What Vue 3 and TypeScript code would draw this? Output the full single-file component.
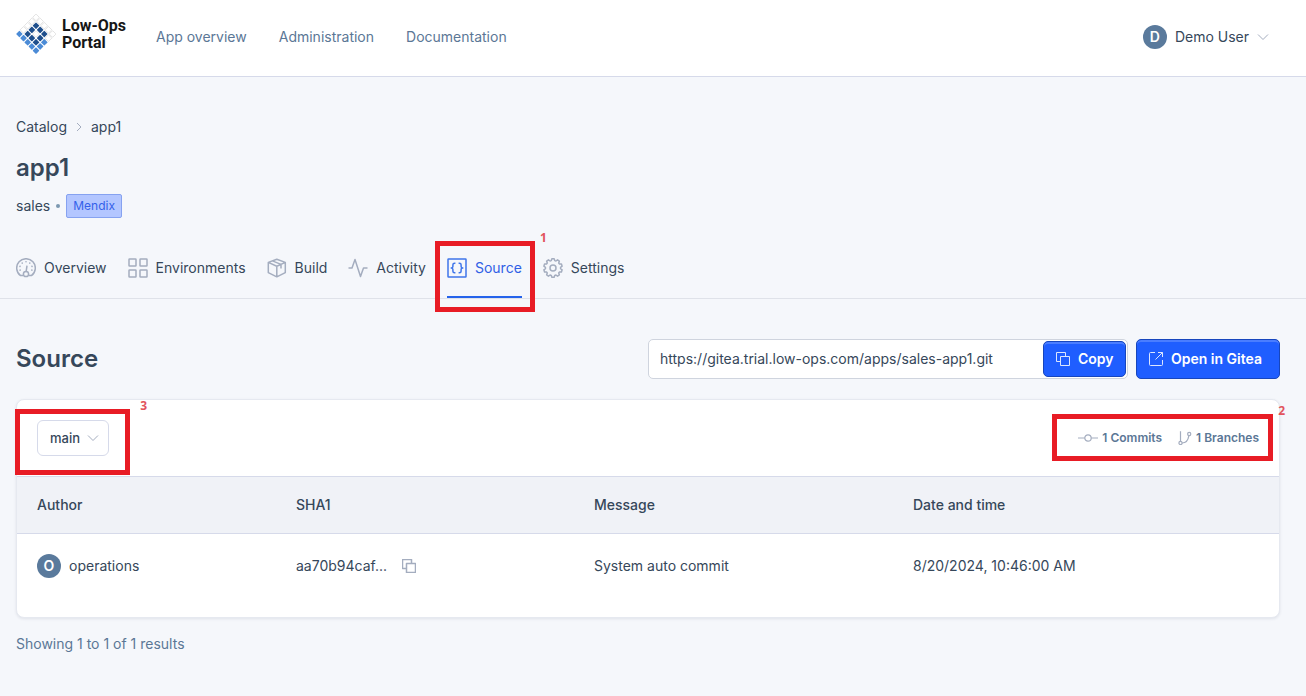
<script setup lang="ts">
import { ref } from 'vue'

interface Cell { x: number; y: number; kind: string }

const cells: Cell[] = []
for (let i = 0; i < 5; i++) {
  for (let j = 0; j < 5; j++) {
    const inner = i > 0 && i < 4 && j > 0 && j < 4
    let kind = 'empty'
    if (inner && !(i === 2 && j === 2)) kind = 'dark'
    else if (j === 0 || (i === 4 && j < 3)) kind = 'light'
    cells.push({ x: 3.4 + (i + j) * 4.15, y: 20 + (i - j) * 4.15, kind })
  }
}

const nav = ['App overview', 'Administration', 'Documentation']
const tabs = ['Overview', 'Environments', 'Build', 'Activity', 'Source', 'Settings']
const columns = ['Author', 'SHA1', 'Message', 'Date and time']
const repoUrl = ref('https://gitea.trial.low-ops.com/apps/sales-app1.git')
const branch = ref('main')

const ticks = [-110, -75, -38, 0, 38, 75, 110]
const gear = (() => {
  const pts: string[] = []
  for (let k = 0; k < 10; k++) {
    const a = (k * 36 - 90) * Math.PI / 180
    const add = (r: number, off: number) => {
      const t = a + off * Math.PI / 180
      pts.push(`${(10 + r * Math.cos(t)).toFixed(2)} ${(10 + r * Math.sin(t)).toFixed(2)}`)
    }
    add(7.6, -13)
    add(9.3, -7)
    add(9.3, 7)
    add(7.6, 13)
  }
  return `M${pts.join('L')}Z`
})()
</script>

<template>
  <div class="page">
    <header class="topbar">
      <a class="brand" href="#">
        <svg width="40" height="40" viewBox="0 0 40 40" aria-hidden="true">
          <rect v-for="(c, n) in cells" :key="n" :class="c.kind" :x="c.x - 2.4" :y="c.y - 2.4" width="4.8" height="4.8" rx="0.5" :transform="`rotate(45 ${c.x} ${c.y})`" />
        </svg>
        <span>Low-Ops<br />Portal</span>
      </a>
      <nav class="mainnav">
        <a v-for="item in nav" :key="item" href="#">{{ item }}</a>
      </nav>
      <button class="user" type="button">
        <span class="avatar">D</span>
        <span>Demo User</span>
        <svg width="12" height="12" viewBox="0 0 12 12" class="icon thin"><path d="M1 3.5 6 8.5l5-5" /></svg>
      </button>
    </header>

    <main>
      <section class="intro">
        <nav class="crumbs">
          <a href="#">Catalog</a>
          <svg width="8" height="10" viewBox="0 0 8 10" class="icon thin"><path d="m2 1 4 4-4 4" /></svg>
          <a href="#">app1</a>
        </nav>
        <h1>app1</h1>
        <div class="meta"><span>sales</span><span class="dot"></span><span class="badge">Mendix</span></div>
      </section>

      <nav class="tabs">
        <a v-for="tab in tabs" :key="tab" href="#" :class="{ active: tab === 'Source' }">
          <svg width="20" height="20" viewBox="0 0 20 20" class="icon">
            <template v-if="tab === 'Overview'">
              <path d="M7.2 17.6H4.6A9.3 9.3 0 1 1 15.4 17.6H12.8" />
              <circle cx="10" cy="16" r="2.6" />
              <path d="M10.2 13.2 11 7.6" />
              <circle v-for="t in ticks" :key="t" class="fill" cx="10" cy="3.8" r="0.8" :transform="`rotate(${t} 10 10)`" />
            </template>
            <template v-else-if="tab === 'Environments'">
              <rect x="1" y="1" width="7" height="7" rx="0.5" /><rect x="12" y="1" width="7" height="7" rx="0.5" />
              <rect x="1" y="12" width="7" height="7" rx="0.5" /><rect x="12" y="12" width="7" height="7" rx="0.5" />
            </template>
            <template v-else-if="tab === 'Build'">
              <path d="M9.8 1.2 18.3 4.4V14.6L9.8 18.8 1.3 14.6V4.4ZM1.3 4.4 9.8 8.2 18.3 4.4M9.8 8.2V18.8M5.4 2.9 14 6.4V10.4" />
            </template>
            <path v-else-if="tab === 'Activity'" d="M0.5 10H4L7 1.5 12.5 18.5 15.5 10H19.5" />
            <template v-else-if="tab === 'Source'">
              <rect x="1" y="1" width="18" height="18" rx="0.5" />
              <path d="M8.4 5.2H7.6C6.4 5.2 5.9 5.8 5.9 6.7V8.5C5.9 9.4 5.2 10 4.2 10 5.2 10 5.9 10.6 5.9 11.5V13.3C5.9 14.2 6.4 14.8 7.6 14.8H8.4M11.6 5.2H12.4C13.6 5.2 14.1 5.8 14.1 6.7V8.5C14.1 9.4 14.8 10 15.8 10 14.8 10 14.1 10.6 14.1 11.5V13.3C14.1 14.2 13.6 14.8 12.4 14.8H11.6" />
            </template>
            <template v-else>
              <path :d="gear" /><circle cx="10" cy="10" r="3" />
            </template>
          </svg>
          <span>{{ tab }}</span>
          <span v-if="tab === 'Source'" class="mark mark-tab"><b>1</b></span>
        </a>
      </nav>

      <section class="content">
        <div class="heading">
          <h2>Source</h2>
          <div class="repo">
            <input v-model="repoUrl" type="text" aria-label="Repository URL" readonly />
            <button class="primary copy" type="button">
              <svg width="14" height="14" viewBox="0 0 14 14" class="icon"><path d="M4.5 9.5H.5V.5H9.5V4.5M4.5 4.5H13.5V13.5H4.5Z" /></svg>
              Copy
            </button>
          </div>
          <button class="primary open" type="button">
            <svg width="14" height="14" viewBox="0 0 14 14" class="icon"><path d="M6 .5H1.5A1 1 0 0 0 .5 1.5V12.5A1 1 0 0 0 1.5 13.5H12.5A1 1 0 0 0 13.5 12.5V8M6.5 7.5 13.5.5M9 .5H13.5V5" /></svg>
            Open in Gitea
          </button>
        </div>

        <div class="card">
          <div class="toolbar">
            <div class="branch">
              <select v-model="branch" aria-label="Branch"><option>main</option></select>
              <svg width="12" height="12" viewBox="0 0 12 12" class="icon thin chevron"><path d="M1 3.5 6 8.5l5-5" /></svg>
              <span class="mark mark-branch"><b>3</b></span>
            </div>
            <div class="stats">
              <a href="#">
                <svg width="20" height="14" viewBox="0 0 20 14" class="icon"><path d="M0 7H6.8M13.2 7H20" /><circle cx="10" cy="7" r="3.2" /></svg>
                1 Commits
              </a>
              <a href="#">
                <svg width="14" height="14" viewBox="0 0 14 14" class="icon"><path d="M2.5.3V10.3M4 12C8 11.8 10.2 9 10.8 4.8" /><circle cx="2.5" cy="12" r="1.6" /><circle cx="11.2" cy="3" r="1.6" /></svg>
                1 Branches
              </a>
              <span class="mark mark-stats"><b>2</b></span>
            </div>
          </div>
          <table>
            <thead><tr><th v-for="c in columns" :key="c" scope="col">{{ c }}</th></tr></thead>
            <tbody>
              <tr>
                <td><div class="cell"><span class="avatar">O</span>operations</div></td>
                <td>
                  <div class="cell sha">aa70b94caf...
                    <button type="button" aria-label="Copy SHA1"><svg width="14" height="14" viewBox="0 0 14 14" class="icon"><path d="M4.5 9.5H.5V.5H9.5V4.5M4.5 4.5H13.5V13.5H4.5Z" /></svg></button>
                  </div>
                </td>
                <td><div class="cell">System auto commit</div></td>
                <td><div class="cell">8/20/2024, 10:46:00 AM</div></td>
              </tr>
            </tbody>
          </table>
        </div>
        <p class="summary">Showing 1 to 1 of 1 results</p>
      </section>
    </main>
  </div>
</template>

<style>
body { background: #f5f7fb; }
</style>

<style scoped>
.page { font: 14px/20px Inter, "Liberation Sans", sans-serif; color: #36475a; }
.page * { box-sizing: border-box; }
a { color: inherit; text-decoration: none; }
button, input, select { font: inherit; color: inherit; margin: 0; }
button { border: 0; padding: 0; background: none; }
svg { flex: none; display: block; }
.icon { fill: none; stroke: #a4adbf; stroke-width: 1.5; stroke-linejoin: round; }
.icon .fill { fill: #a4adbf; stroke: none; }
.thin { stroke-width: 1; }
.topbar { height: 77px; display: flex; align-items: center; padding: 0 37px 2px 16px; background: #fff; border-bottom: 1px solid #d6daea; }
.brand { display: flex; align-items: center; gap: 6px; padding-bottom: 6px; font: 700 16px/17px Roboto, sans-serif; color: #161616; }
.dark { fill: #1f4f8c; }
.light { fill: #4b8bd6; }
.empty { fill: #fff; stroke: #cacaca; stroke-width: 0.5; }
.mainnav { display: flex; gap: 32px; margin-left: 30px; color: #5b7796; flex: 1; }
.user { display: flex; align-items: center; gap: 8px; }
.avatar { width: 24px; height: 24px; border-radius: 50%; background: #5a7a9c; color: #fff; display: grid; place-items: center; font-weight: 600; }
.intro { padding: 40px 16px 0; }
.crumbs { display: flex; align-items: center; gap: 8px; }
h1, h2 { margin: 0; font-size: 24px; line-height: 32px; font-weight: 600; }
h1 { margin-top: 15px; }
.meta { display: flex; align-items: center; gap: 6px; margin-top: 10px; }
.dot { width: 4px; height: 4px; border-radius: 50%; background: #7b98b0; }
.badge { padding: 1px 6px; border: 1px solid #86a2f0; border-radius: 2px; background: #b3c6ff; color: #3361ea; font-size: 12px; }
.tabs { display: flex; gap: 21px; margin-top: 20px; padding: 0 16px; border-bottom: 1px solid #dfe2e9; }
.tabs a { position: relative; display: flex; align-items: center; gap: 8px; height: 60px; padding-top: 2px; border-bottom: 2px solid transparent; }
.tabs .active { color: #2f60e6; border-color: #2563eb; }
.active .icon { stroke: #3f76ea; }
.content { padding: 40px 26px 40px 16px; }
.heading { display: flex; align-items: center; }
.heading h2 { flex: 1; }
.repo { display: flex; align-items: center; width: 480px; height: 40px; padding: 1px; background: #fff; border: 1px solid #cfd4de; border-radius: 5px; margin-right: 8px; }
.repo input { flex: 1; min-width: 0; border: 0; outline: 0; background: none; padding: 0 10px; }
.primary { display: flex; align-items: center; padding: 0 12px; gap: 8px; background: #1f5eff; border: 1px solid #1746bd; border-radius: 5px; color: #fff; font-weight: 600; white-space: nowrap; box-shadow: inset 0 2px 0 #4a7dff; }
.primary .icon { stroke: #dce6ff; stroke-width: 1; }
.copy { width: 83px; height: 36px; }
.open { width: 144px; height: 40px; }
.card { margin-top: 20px; background: #fff; border: 1px solid #e6e9f0; border-radius: 8px; box-shadow: 0 1px 3px rgba(40, 50, 80, .1); }
.toolbar { height: 76px; display: flex; align-items: center; justify-content: space-between; padding: 0 20px; }
.branch, .stats { position: relative; display: flex; }
.branch select { appearance: none; width: 72px; height: 36px; padding: 0 12px; background: #fff; border: 1px solid #d6daea; border-radius: 6px; font-size: 13px; font-weight: 500; }
.chevron { position: absolute; right: 10px; top: 12px; pointer-events: none; }
.stats { gap: 16px; color: #5b7796; font-size: 12px; font-weight: 600; }
.stats a { display: flex; align-items: center; gap: 4px; }
.stats .icon { stroke-width: 1.2; }
.mark { position: absolute; border: 5px solid #e81c25; pointer-events: none; }
.mark b { position: absolute; font: 700 12px/14px "Open Sans", sans-serif; color: #e2545d; }
.mark-tab { inset: 3px -13px -16px -12px; }
.mark-tab b { right: -17px; top: -15px; }
.mark-branch { inset: -11px -21px -19px -22px; }
.mark-branch b { right: -22px; top: -15px; }
.mark-stats { inset: -14px -14px -13px -26px; }
.mark-stats b { right: -17px; top: -15px; }
table { width: 100%; border-collapse: collapse; table-layout: fixed; }
th, td { text-align: left; padding: 0 20px; }
th { height: 57px; background: #f0f2f7; border-top: 1px solid #d6daea; border-bottom: 1px solid #d6daea; font-weight: 500; }
td { height: 83px; vertical-align: top; padding-top: 20px; }
th:nth-child(1) { width: 259px; }
th:nth-child(2) { width: 298px; }
th:nth-child(3) { width: 319px; }
.cell { display: flex; align-items: center; gap: 8px; min-height: 24px; }
.sha { gap: 15px; }
.summary { margin: 16px 0 0; color: #5b7796; }
</style>
